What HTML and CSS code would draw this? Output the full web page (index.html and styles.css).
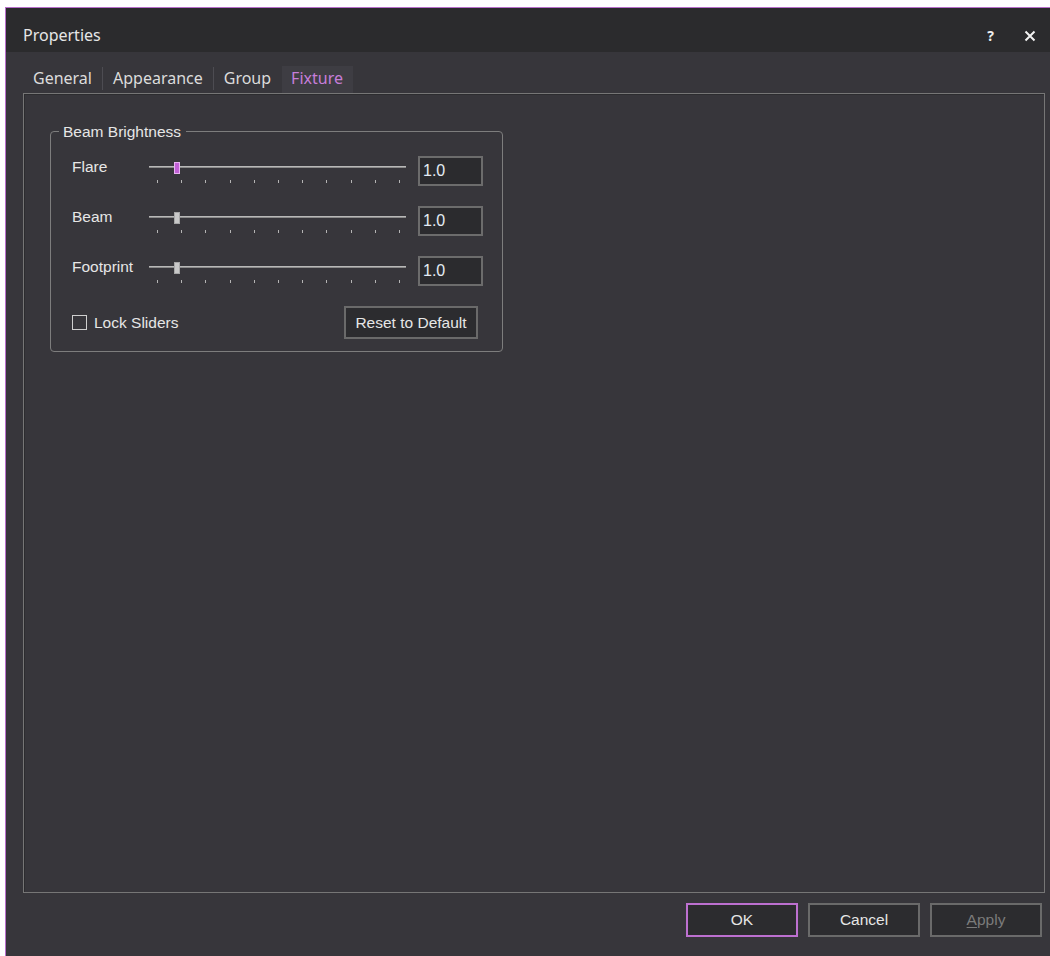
FILE: index.html
```html
<!DOCTYPE html>
<html lang="en">
<head>
<meta charset="utf-8">
<title>Properties</title>
<link rel="stylesheet" href="styles.css">
</head>
<body>
<div class="window">
  <header class="titlebar">
    <span class="title">Properties</span>
    <div class="caption-btns">
      <span class="help">?</span>
      <svg class="close" width="12" height="12" viewBox="0 0 12 12" aria-label="Close">
        <path d="M1.5 1.5 L10.5 10.5 M10.5 1.5 L1.5 10.5" stroke="#f2f2f2" stroke-width="2" fill="none"/>
      </svg>
    </div>
  </header>

  <nav class="tabs">
    <span class="tab">General</span>
    <span class="tab-sep"></span>
    <span class="tab">Appearance</span>
    <span class="tab-sep"></span>
    <span class="tab">Group</span>
    <span class="tab active">Fixture</span>
  </nav>

  <section class="panel">
    <fieldset class="group">
      <legend>Beam Brightness</legend>

      <div class="slider-row">
        <span class="row-label">Flare</span>
        <div class="slider">
          <div class="track"></div>
          <div class="thumb focused"></div>
          <div class="ticks"><i></i><i></i><i></i><i></i><i></i><i></i><i></i><i></i><i></i><i></i><i></i></div>
        </div>
        <div class="value">1.0</div>
      </div>

      <div class="slider-row">
        <span class="row-label">Beam</span>
        <div class="slider">
          <div class="track"></div>
          <div class="thumb"></div>
          <div class="ticks"><i></i><i></i><i></i><i></i><i></i><i></i><i></i><i></i><i></i><i></i><i></i></div>
        </div>
        <div class="value">1.0</div>
      </div>

      <div class="slider-row">
        <span class="row-label">Footprint</span>
        <div class="slider">
          <div class="track"></div>
          <div class="thumb"></div>
          <div class="ticks"><i></i><i></i><i></i><i></i><i></i><i></i><i></i><i></i><i></i><i></i><i></i></div>
        </div>
        <div class="value">1.0</div>
      </div>

      <div class="options-row">
        <label class="check"><span class="box"></span>Lock Sliders</label>
        <button class="btn reset">Reset to Default</button>
      </div>
    </fieldset>
  </section>

  <footer class="dialog-btns">
    <button class="btn dlg ok">OK</button>
    <button class="btn dlg">Cancel</button>
    <button class="btn dlg disabled"><u>A</u>pply</button>
  </footer>
</div>
</body>
</html>
```

FILE: styles.css
```css
* { box-sizing: border-box; }

html, body {
  margin: 0;
  padding: 0;
  background: #ffffff;
}

body {
  width: 1050px;
  height: 956px;
  overflow: hidden;
}

.window {
  margin: 7px 0 0 5px;
  width: 1045px;
  height: 949px;
  border-top: 1px solid #b86fcb;
  border-left: 1px solid #b86fcb;
  background: #37363b;
  display: flex;
  flex-direction: column;
}

/* caption bar */
.titlebar {
  height: 44px;
  flex: none;
  background: #2b2b2d;
  display: flex;
  align-items: flex-start;
  justify-content: space-between;
  padding: 16px 14px 0 17px;
  font-family: "Noto Sans", sans-serif;
  color: #e6e6e6;
}

.title {
  font-size: 16px;
  line-height: 22px;
}

.caption-btns {
  display: flex;
  align-items: center;
  gap: 30px;
  height: 22px;
  padding-top: 2px;
}

.help {
  font-size: 14px;
  font-weight: 700;
  color: #eeeeee;
  line-height: 14px;
}

.close { display: block; }

/* tab strip */
.tabs {
  height: 41px;
  flex: none;
  display: flex;
  align-items: flex-end;
  padding-left: 17px;
  font-family: "Noto Sans", sans-serif;
  font-size: 16px;
}

.tab {
  height: 27px;
  line-height: 25px;
  padding: 0 10px;
  color: #dcdcdc;
}

.tab.active {
  background: #3e3d43;
  color: #c67ed9;
  padding: 0 10px 0 9px;
  margin-left: 1px;
}

.tab-sep {
  width: 1px;
  height: 23px;
  margin-bottom: 3px;
  background: #4d4c52;
}

/* page area */
.panel {
  flex: 1;
  margin: 0 5px 0 17px;
  border: 1px solid #767676;
  box-shadow: inset 1px 1px 0 #2c2c2f;
  padding: 0 0 0 26px;
  font-family: "Liberation Sans", Arial, sans-serif;
  font-size: 15.5px;
  color: #e6e6e6;
}

.group {
  width: 453px;
  margin: 29px 0 0 0;
  padding: 16px 18px 12px 21px;
  border: 1px solid #7d7d7d;
  border-radius: 4px;
  display: flex;
  flex-direction: column;
  gap: 20px;
  min-width: 0;
}

.group legend {
  margin-left: -13px;
  padding: 0 5px 0 4px;
  line-height: 17px;
  color: #e6e6e6;
}

/* slider rows */
.slider-row {
  display: flex;
  height: 30px;
}

.row-label {
  width: 77px;
  flex: none;
  padding-top: 2px;
  line-height: 17px;
}

.slider {
  position: relative;
  width: 257px;
  flex: none;
  height: 30px;
}

.track {
  margin-top: 10px;
  height: 2px;
  background: #b8b8b8;
  border-bottom: 1px solid #8a8a8a;
}

.thumb {
  position: absolute;
  left: 25px;
  top: 6px;
  width: 6px;
  height: 12px;
  background: #c8c8c8;
  border: 1px solid #a6a6a6;
}

.thumb.focused {
  background: #c160d6;
  border-color: #e8b2f2;
}

.ticks {
  display: flex;
  justify-content: space-between;
  margin-top: 12px;
  padding: 0 6px 0 8px;
}

.ticks i {
  display: block;
  width: 1px;
  height: 3px;
  background: #b4b4b4;
}

.value {
  margin-left: 12px;
  width: 65px;
  height: 30px;
  flex: none;
  border: 2px solid #6c6c6c;
  background: #2b2b2e;
  padding: 0 3px;
  line-height: 26px;
  font-size: 16px;
  color: #e4ebf3;
}

/* bottom of group */
.options-row {
  display: flex;
  align-items: center;
  justify-content: space-between;
  height: 33px;
}

.check {
  display: flex;
  align-items: center;
  gap: 7px;
}

.box {
  width: 15px;
  height: 15px;
  border: 1px solid #cfcfcf;
}

.btn {
  font-family: "Liberation Sans", Arial, sans-serif;
  font-size: 15.5px;
  color: #e6e6e6;
  background: #2c2c2f;
  border: 2px solid #6a6a6a;
  padding: 0;
}

.reset {
  width: 134px;
  height: 33px;
  margin-right: 6px;
}

/* dialog buttons */
.dialog-btns {
  flex: none;
  display: flex;
  justify-content: flex-end;
  gap: 10px;
  padding: 10px 8px 19px 0;
}

.dlg {
  width: 112px;
  height: 34px;
}

.dlg.ok { border-color: #bd70d0; }

.dlg.disabled { color: #7b7b7b; }
.dlg.disabled u { text-decoration-thickness: 1px; text-underline-offset: 2px; }
```
